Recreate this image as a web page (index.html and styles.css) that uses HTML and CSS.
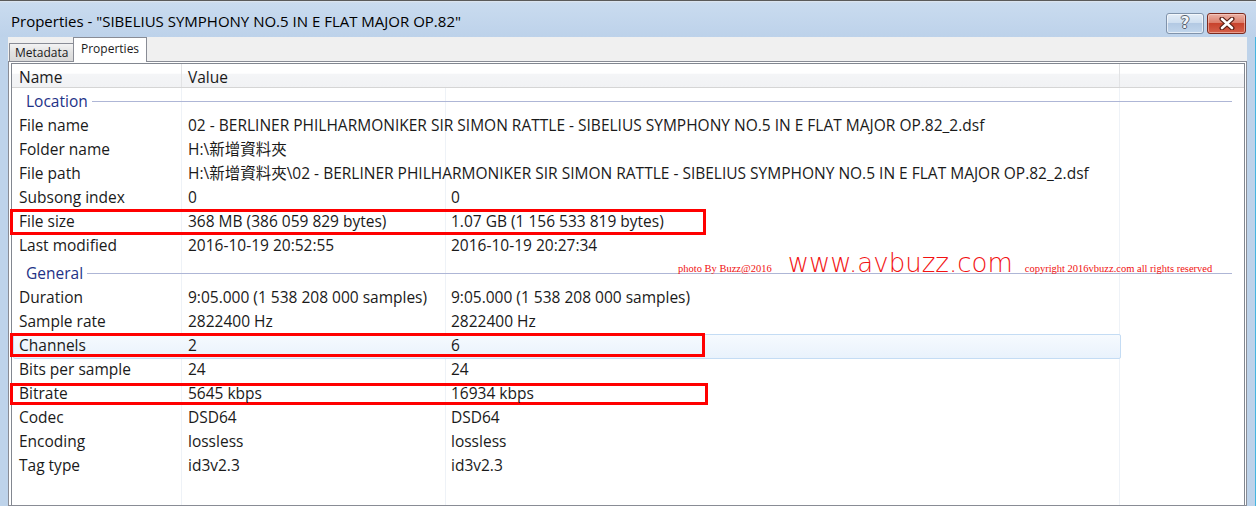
FILE: index.html
```html
<!DOCTYPE html>
<html>
<head>
<meta charset="utf-8">
<link rel="stylesheet" href="styles.css">
</head>
<body>
<div class="window">
  <div class="topstrip"></div>
  <div class="titlebar">
    <div class="title">Properties - "SIBELIUS SYMPHONY NO.5 IN E FLAT MAJOR OP.82"</div>
    <div class="caption-buttons">
      <div class="cbtn help"><span class="qmark">?</span></div>
      <div class="cbtn close">
        <svg width="16" height="13" viewBox="0 0 16 13">
          <path d="M3 2 L13 11 M13 2 L3 11" stroke="#5a2016" stroke-width="5" stroke-linecap="round"/>
          <path d="M3 2 L13 11 M13 2 L3 11" stroke="#ffffff" stroke-width="2.6" stroke-linecap="round"/>
        </svg>
      </div>
    </div>
  </div>
  <div class="frame">
    <div class="client">
      <div class="tabs">
        <div class="tab">Metadata</div>
        <div class="tab active">Properties</div>
      </div>
      <div class="panel">
        <div class="list">
          <div class="header">
            <div class="hcell hname">Name</div>
            <div class="hcell hvalue">Value</div>
            <div class="hcell hrest"></div>
          </div>
          <div class="list-body">
            <div class="group first"><span>Location</span></div>
            <div class="row"><div class="c1">File name</div><div class="c2">02 - BERLINER PHILHARMONIKER SIR SIMON RATTLE - SIBELIUS SYMPHONY NO.5 IN E FLAT MAJOR OP.82_2.dsf</div><div class="c3"></div></div>
            <div class="row"><div class="c1">Folder name</div><div class="c2">H:\新增資料夾</div><div class="c3"></div></div>
            <div class="row"><div class="c1">File path</div><div class="c2">H:\新增資料夾\02 - BERLINER PHILHARMONIKER SIR SIMON RATTLE - SIBELIUS SYMPHONY NO.5 IN E FLAT MAJOR OP.82_2.dsf</div><div class="c3"></div></div>
            <div class="row"><div class="c1">Subsong index</div><div class="c2">0</div><div class="c3">0</div></div>
            <div class="row"><div class="c1">File size</div><div class="c2">368 MB (386 059 829 bytes)</div><div class="c3">1.07 GB (1 156 533 819 bytes)</div></div>
            <div class="row"><div class="c1">Last modified</div><div class="c2">2016-10-19 20:52:55</div><div class="c3">2016-10-19 20:27:34</div></div>
            <div class="group"><span>General</span></div>
            <div class="row"><div class="c1">Duration</div><div class="c2">9:05.000 (1 538 208 000 samples)</div><div class="c3">9:05.000 (1 538 208 000 samples)</div></div>
            <div class="row"><div class="c1">Sample rate</div><div class="c2">2822400 Hz</div><div class="c3">2822400 Hz</div></div>
            <div class="row hover"><div class="c1">Channels</div><div class="c2">2</div><div class="c3">6</div></div>
            <div class="row"><div class="c1">Bits per sample</div><div class="c2">24</div><div class="c3">24</div></div>
            <div class="row"><div class="c1">Bitrate</div><div class="c2">5645 kbps</div><div class="c3">16934 kbps</div></div>
            <div class="row"><div class="c1">Codec</div><div class="c2">DSD64</div><div class="c3">DSD64</div></div>
            <div class="row"><div class="c1">Encoding</div><div class="c2">lossless</div><div class="c3">lossless</div></div>
            <div class="row"><div class="c1">Tag type</div><div class="c2">id3v2.3</div><div class="c3">id3v2.3</div></div>
          </div>
        </div>
      </div>
    </div>
  </div>

  <div class="watermark">
    <span class="wm-small">photo By Buzz@2016</span>
    <span class="wm-big">www.avbuzz.com</span>
    <span class="wm-small">copyright 2016vbuzz.com all rights reserved</span>
  </div>
  <div class="redbox box-size"></div>
  <div class="redbox box-channels"></div>
  <div class="redbox box-bitrate"></div>
</div>
</body>
</html>
```
FILE: styles.css
```css
* { box-sizing: border-box; }
html, body { margin: 0; padding: 0; }
body {
  width: 1256px;
  height: 506px;
  overflow: hidden;
  font-family: "Open Sans", "Noto Sans CJK TC", sans-serif;
  font-size: 15.5px;
  color: #1a1a1a;
  background: #bfd3ea;
}
.window {
  position: relative;
  width: 1256px;
  height: 506px;
  display: flex;
  flex-direction: column;
  background: #bed3ea;
}
.topstrip {
  height: 3px;
  background: linear-gradient(#5a5a5a 0, #5a5a5a 1px, #dfe7f0 1px, #c9d9ec 3px);
}
.titlebar {
  height: 34px;
  display: flex;
  justify-content: space-between;
  align-items: flex-start;
  background: linear-gradient(#c9dbef, #bdd2ea);
}
.title {
  padding: 8px 0 0 11px;
  font-size: 15px;
  line-height: 20px;
  color: #000;
  white-space: nowrap;
}
.caption-buttons {
  display: flex;
  gap: 3px;
  padding: 10px 10px 0 0;
}
.cbtn {
  height: 21px;
  border-radius: 3px;
  display: flex;
  align-items: center;
  justify-content: center;
}
.help {
  width: 38px;
  border: 1px solid #8093ab;
  background: linear-gradient(#e4edf7 0, #cfdff0 45%, #b3c9e3 50%, #c1d6ec 100%);
  box-shadow: inset 0 0 0 1px rgba(255,255,255,0.6);
}
.qmark {
  font-family: "DejaVu Sans", sans-serif;
  font-weight: bold;
  font-size: 15px;
  line-height: 15px;
  color: #f2f5f9;
  text-shadow: 1px 0 0 #55606d, -1px 0 0 #55606d, 0 1px 0 #55606d, 0 -1px 0 #55606d;
}
.close {
  width: 39px;
  border: 1px solid #7c2a1e;
  background: linear-gradient(#eab1a5 0, #dc7f6c 45%, #c8432d 50%, #d4604a 100%);
  box-shadow: inset 0 0 0 1px rgba(255,220,210,0.5);
}
.frame {
  flex: 1;
  display: flex;
  padding: 0 8px;
  background: #bed3ea;
  border-right: 1px solid #45b5e0;
}
.client {
  flex: 1;
  display: flex;
  flex-direction: column;
  background: #f0f0f0;
}
.tabs {
  height: 24px;
  display: flex;
  align-items: flex-end;
  position: relative;
  z-index: 1;
}
.tab {
  font-size: 12px;
  line-height: 16px;
  border: 1px solid #898c95;
  border-bottom: none;
  white-space: nowrap;
}
.tab:first-child {
  margin-left: 1px;
  width: 64px;
  height: 18px;
  padding: 1px 0 0 5px;
  background: linear-gradient(#f3f3f3, #e2e2e2 50%, #d9d9d9);
  border-right: none;
}
.tab.active {
  width: 74px;
  height: 25px;
  margin-bottom: -1px;
  padding: 3px 0 0 7px;
  background: #ffffff;
}
.panel {
  flex: 1;
  border: 1px solid #898c95;
  background: #ffffff;
  padding: 1px 1px 0 2px;
  display: flex;
}
.list {
  flex: 1;
  border: 1px solid #828790;
  border-bottom: none;
  display: flex;
  flex-direction: column;
  background: #ffffff;
}
.header {
  height: 24px;
  display: flex;
  border-bottom: 1px solid #d5d5d5;
  background: linear-gradient(#ffffff 0, #ffffff 40%, #f4f5f7 45%, #f1f2f4 100%);
}
.hcell {
  line-height: 22px;
  padding-top: 2px;
  padding-left: 7px;
  color: #1a1a1a;
}
.hname { width: 170px; border-right: 1px solid #e2e3e5; }
.hvalue { width: 938px; border-right: 1px solid #e2e3e5; padding-left: 6px; }
.hrest { flex: 1; }
.list-body {
  flex: 1;
  background-image:
    linear-gradient(#eef2f7, #eef2f7),
    linear-gradient(#eef2f7, #eef2f7),
    linear-gradient(#eef2f7, #eef2f7);
  background-size: 1px 100%;
  background-repeat: no-repeat;
  background-position: 169px 0, 433px 0, 1107px 0;
}
.group {
  height: 25px;
  margin-top: 3px;
  display: flex;
  align-items: center;
  padding: 0 12px 0 14px;
  color: #1e3287;
  white-space: nowrap;
}
.group.first { margin-top: 0; }
.group::after {
  content: "";
  flex: 1;
  height: 1px;
  margin: 1px 0 0 4px;
  background: #aeb6d6;
}
.row {
  height: 24px;
  display: grid;
  grid-template-columns: 170px 264px 1fr;
  line-height: 24px;
  white-space: nowrap;
  position: relative;
}
.row > div { position: relative; z-index: 1; }
.c1 { padding-left: 7px; }
.c2 { padding-left: 6px; }
.c3 { padding-left: 5px; }
.row.hover::before {
  content: "";
  position: absolute;
  left: 1px;
  top: 1px;
  width: 1106px;
  height: 23px;
  border: 1px solid #c4dcf4;
  border-radius: 2px;
  background: linear-gradient(#f6fafe, #e9f2fc);
}
.watermark {
  position: absolute;
  left: 678px;
  top: 248px;
  display: flex;
  align-items: baseline;
  color: #f01010;
  white-space: nowrap;
}
.wm-small {
  font-family: "Liberation Serif", serif;
  font-size: 10.5px;
}
.wm-big {
  font-family: "DejaVu Sans", sans-serif;
  font-weight: 200;
  font-size: 26px;
  margin: 0 12px 0 16px;
  color: #f21212;
}
.redbox {
  position: absolute;
  left: 10px;
  border: 3px solid #ff0000;
}
.box-size { top: 209px; width: 696px; height: 26px; }
.box-channels { top: 333px; width: 695px; height: 24px; }
.box-bitrate { top: 383px; width: 698px; height: 22px; }
```
